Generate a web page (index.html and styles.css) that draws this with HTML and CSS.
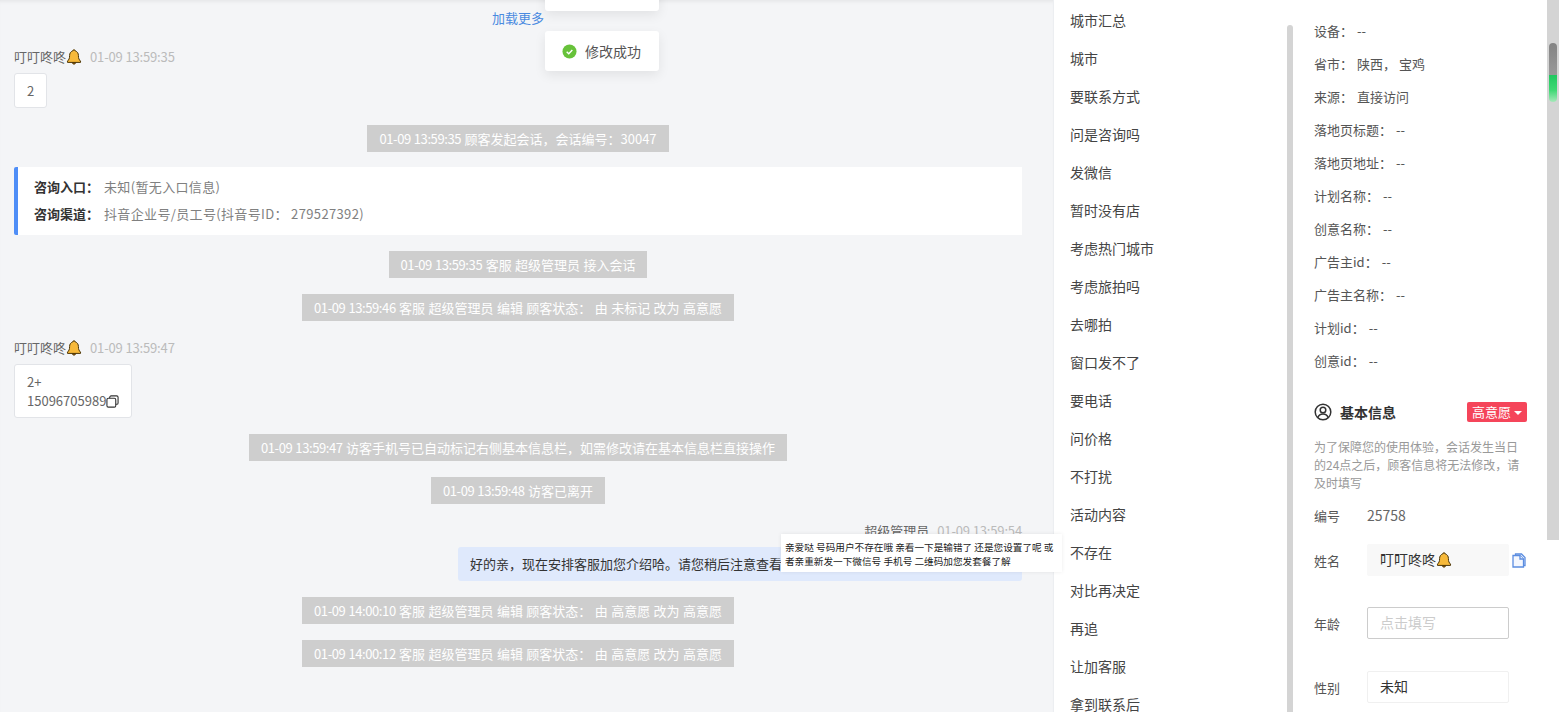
FILE: index.html
```html
<!DOCTYPE html>
<html lang="zh-CN">
<head>
    <meta charset="UTF-8">
    <title>会话详情</title>
    <link rel="stylesheet" href="styles.css">
</head>

<body>
    <svg class="defs">
        <symbol id="bell" viewBox="0 0 16 16">
            <path d="M8 .8c.8 0 1.300.5 1.300 1.200 2.200.6 3.100 2.400 3.100 4.600 0 2.900.7 4.200 2.100 5.500v1.300H1.500v-1.300c1.400-1.300 2.100-2.600 2.100-5.500 0-2.200.9-4 3.100-4.600C6.700 1.300 7.200.8 8 .8z" fill="#f7b93a" stroke="#4a3508" stroke-width="1"/>
            <path d="M6.200 13.500c.2 1 .9 1.700 1.800 1.700s1.600-.7 1.800-1.700z" fill="#8a5a10" stroke="#4a3508" stroke-width=".8"/>
        </symbol>
    </svg>

    <!-- Chat column -->
    <div class="chat">
        <div class="load-more">加载更多</div>

        <div class="name-row">叮叮咚咚<svg class="bell"><use href="#bell"/></svg><span class="time">01-09 13:59:35</span></div>
        <div class="bubble">2</div>

        <div class="sys sys-first"><span class="stamp">01-09 13:59:35</span> 顾客发起会话，会话编号：30047</div>

        <div class="entry-card">
            <div><b>咨询入口：</b>未知(暂无入口信息)</div>
            <div><b>咨询渠道：</b>抖音企业号/员工号(抖音号ID： 279527392)</div>
        </div>

        <div class="sys"><span class="stamp">01-09 13:59:35</span> 客服 超级管理员 接入会话</div>
        <div class="sys"><span class="stamp">01-09 13:59:46</span> 客服 超级管理员 编辑 顾客状态： 由 未标记 改为 高意愿</div>

        <div class="name-row name-gap">叮叮咚咚<svg class="bell"><use href="#bell"/></svg><span class="time">01-09 13:59:47</span></div>
        <div class="bubble">2+<br>15096705989<svg class="copy-small" viewBox="0 0 14 14"><rect x="1" y="3.500" width="9.500" height="9.500" rx="1.500"/><path d="M4 3.500V2.500A1.500 1.500 0 0 1 5.500 1H11.500A1.500 1.500 0 0 1 13 2.500V8.500A1.500 1.500 0 0 1 11.500 10H10.500"/></svg></div>

        <div class="sys"><span class="stamp">01-09 13:59:47</span> 访客手机号已自动标记右侧基本信息栏，如需修改请在基本信息栏直接操作</div>
        <div class="sys"><span class="stamp">01-09 13:59:48</span> 访客已离开</div>

        <div class="name-row name-gap name-right">超级管理员<span class="time">01-09 13:59:54</span></div>
        <div class="bubble-me">好的亲，现在安排客服加您介绍哈。请您稍后注意查看</div>

        <div class="sys"><span class="stamp">01-09 14:00:10</span> 客服 超级管理员 编辑 顾客状态： 由 高意愿 改为 高意愿</div>
        <div class="sys"><span class="stamp">01-09 14:00:12</span> 客服 超级管理员 编辑 顾客状态： 由 高意愿 改为 高意愿</div>
    </div>

    <!-- Quick reply list -->
    <div class="quick">
        <div class="quick-list">
            <div>城市汇总</div>
            <div>城市</div>
            <div>要联系方式</div>
            <div>问是咨询吗</div>
            <div>发微信</div>
            <div>暂时没有店</div>
            <div>考虑热门城市</div>
            <div>考虑旅拍吗</div>
            <div>去哪拍</div>
            <div>窗口发不了</div>
            <div>要电话</div>
            <div>问价格</div>
            <div>不打扰</div>
            <div>活动内容</div>
            <div>不存在</div>
            <div>对比再决定</div>
            <div>再追</div>
            <div>让加客服</div>
            <div>拿到联系后</div>
        </div>
        <div class="quick-bar"></div>
    </div>

    <!-- Customer panel -->
    <div class="panel">
        <div class="info-rows">
            <div>设备：<span class="val">--</span></div>
            <div>省市：<span class="val">陕西， 宝鸡</span></div>
            <div>来源：<span class="val">直接访问</span></div>
            <div>落地页标题：<span class="val">--</span></div>
            <div>落地页地址：<span class="val">--</span></div>
            <div>计划名称：<span class="val">--</span></div>
            <div>创意名称：<span class="val">--</span></div>
            <div>广告主id：<span class="val">--</span></div>
            <div>广告主名称：<span class="val">--</span></div>
            <div>计划id：<span class="val">--</span></div>
            <div>创意id：<span class="val">--</span></div>
        </div>

        <div class="base-head">
            <svg class="user-icon" viewBox="0 0 18 18"><circle cx="9" cy="9" r="7.800"/><circle cx="9" cy="7" r="2.800"/><path d="M3.800 14.600c1-2.500 3-3.500 5.200-3.500s4.200 1 5.200 3.500"/></svg>
            <span class="base-title">基本信息</span>
            <span class="level-tag">高意愿<i class="caret"></i></span>
        </div>
        <div class="note">为了保障您的使用体验，会话发生当日的24点之后，顾客信息将无法修改，请及时填写</div>

        <div class="field field-plain"><label>编号</label><span>25758</span></div>
        <div class="field field-name">
            <label>姓名</label>
            <div class="box box-filled">叮叮咚咚<svg class="bell"><use href="#bell"/></svg></div>
            <svg class="copy-doc" viewBox="0 0 14 15"><path d="M3.500 2.500V1H9.500L13 4.500V12.500H11.500"/><path d="M1 2.500H8L11.500 6V14H1z"/><path d="M8 2.500V6H11.500"/></svg>
        </div>
        <div class="field field-age">
            <label>年龄</label>
            <div class="box box-empty">点击填写</div>
        </div>
        <div class="field">
            <label>性别</label>
            <div class="box">未知</div>
        </div>
    </div>

    <div class="page-scroll">
        <div class="page-thumb"><div class="thumb-green"></div></div>
    </div>

    <!-- Toasts -->
    <div class="toasts">
        <div class="toast toast-old"></div>
        <div class="toast">
            <svg class="check" viewBox="0 0 16 16"><circle cx="8" cy="8" r="7.500"/><path d="M5 8.200l2.200 2.200L11 6.300"/></svg>
            修改成功
        </div>
    </div>

    <!-- Tooltip over the message -->
    <div class="tip">亲爱哒 号码用户不存在哦 亲看一下是输错了 还是您设置了呢 或者亲重新发一下微信号 手机号 二维码加您发套餐了解</div>
</body>
</html>
```

FILE: styles.css
```css
* {
    box-sizing: border-box;
}
body {
    display: flex;
    height: 100vh;
    margin: 0;
    overflow: hidden;
    font-family: "Noto Sans CJK SC", sans-serif;
    font-size: 13px;
    color: #333;
    background: #fff;
}
.defs {
    display: none;
}
.bell {
    width: 16px;
    height: 16px;
    vertical-align: -3px;
}

/* chat */
.chat {
    width: 1054px;
    flex-shrink: 0;
    padding: 8px 31px 0 14px;
    background: #f4f5f7;
    box-shadow: inset 0 4px 4px -3px rgba(0, 0, 0, 0.08);
    border-right: 1px solid #eceef1;
}
.load-more {
    height: 20px;
    line-height: 20px;
    text-align: center;
    color: #4a8ae0;
}
.name-row {
    height: 20px;
    line-height: 20px;
    margin-top: 19px;
    color: #666;
}
.name-gap {
    margin-top: 17px;
}
.name-right {
    text-align: right;
}
.time {
    margin-left: 8px;
    color: #bbb;
    letter-spacing: -0.15px;
}
.bubble {
    display: table;
    margin-top: 6px;
    padding: 7px 12px;
    line-height: 19px;
    border: 1px solid #e2e4e8;
    border-radius: 3px;
    background: #fff;
    color: #666;
}
.copy-small {
    width: 13px;
    height: 13px;
    vertical-align: -2px;
    fill: none;
    stroke: #333;
    stroke-width: 1.200;
}
.sys {
    display: table;
    margin: 16px auto 0;
    padding: 0 12px;
    height: 27px;
    line-height: 27px;
    word-spacing: 0.5px;
    background: #cecece;
    color: #fff;
}
.stamp {
    letter-spacing: -0.4px;
}
.sys-first {
    margin-top: 17px;
}
.entry-card {
    margin-top: 15px;
    height: 68px;
    padding: 6px 16px;
    line-height: 27px;
    letter-spacing: 0.35px;
    border-left: 4px solid #4f8ef7;
    border-radius: 2px 0 0 2px;
    background: #fff;
    color: #808080;
}
.entry-card b {
    margin-right: 5px;
    letter-spacing: 0;
    color: #333;
}
.bubble-me {
    width: 564px;
    height: 34px;
    margin: 6px 0 0 auto;
    padding: 0 12px;
    line-height: 34px;
    white-space: nowrap;
    border-radius: 3px;
    background: #dfe9fc;
}

/* quick replies */
.quick {
    display: flex;
    width: 239px;
    flex-shrink: 0;
    overflow: hidden;
}
.quick-list {
    flex-grow: 1;
    padding: 1px 0 0 16px;
    font-size: 14px;
    color: #444;
}
.quick-list div {
    height: 38px;
    line-height: 38px;
    white-space: nowrap;
}
.quick-bar {
    width: 6px;
    margin: 25px 0 0;
    background: #d4d4d4;
    border-radius: 3px 3px 0 0;
}

/* customer panel */
.panel {
    width: 254px;
    flex-shrink: 0;
    padding: 0 20px 0 21px;
    overflow: hidden;
}
.info-rows {
    padding-top: 14px;
}
.info-rows div {
    height: 33px;
    line-height: 33px;
    color: #555;
}
.val {
    margin-left: 4px;
}
.base-head {
    display: flex;
    align-items: center;
    margin-top: 25px;
    height: 20px;
}
.user-icon {
    width: 18px;
    height: 18px;
    fill: none;
    stroke: #333;
    stroke-width: 1.500;
}
.base-title {
    margin-left: 8px;
    font-size: 14px;
    font-weight: 700;
}
.level-tag {
    margin-left: auto;
    width: 60px;
    height: 20px;
    line-height: 20px;
    text-align: center;
    color: #fff;
    background: #f5455a;
    border-radius: 2px;
}
.caret {
    display: inline-block;
    margin-left: 3px;
    border: 4px solid transparent;
    border-top-color: #fff;
    border-bottom-width: 0;
    vertical-align: 2px;
}
.note {
    margin-top: 16px;
    font-size: 12px;
    line-height: 18px;
    color: #999;
}
.field {
    display: flex;
    align-items: center;
    height: 32px;
    margin-top: 32px;
}
.field-plain {
    height: 20px;
    margin-top: 13px;
    color: #666;
    font-size: 14px;
}
.field-plain label {
    font-size: 13px;
}
.field-name {
    margin-top: 19px;
}
.field-age {
    margin-top: 31px;
}
.field label {
    width: 53px;
    flex-shrink: 0;
    color: #555;
}
.box {
    width: 142px;
    height: 32px;
    padding: 0 12px;
    font-size: 14px;
    line-height: 29px;
    border: 1px solid #f0f0f0;
    border-radius: 2px;
}
.box-filled {
    background: #f8f8f8;
    border-color: #f8f8f8;
}
.box-empty {
    border-color: #ccc;
    color: #ccc;
}
.copy-doc {
    width: 14px;
    height: 15px;
    margin-left: 3px;
    fill: #f4f7fe;
    stroke: #5b8de0;
    stroke-width: 1.300;
}

/* page scrollbar */
.page-scroll {
    width: 12px;
    flex-shrink: 0;
}
.page-thumb {
    height: 540px;
    padding: 43px 2px 0;
    background: #d4d4d4;
}
.thumb-green {
    height: 59px;
    border-radius: 4px;
    background: linear-gradient(#848484 0, #999 54%, #1fc85f 54%, #3fd874 80%, #a6e8ba 100%);
}

/* overlays */
.toasts {
    position: absolute;
    top: -29px;
    left: 545px;
    width: 114px;
}
.toast {
    display: flex;
    align-items: center;
    height: 40px;
    margin-bottom: 20px;
    padding-left: 17px;
    font-size: 14px;
    color: #555;
    background: #fff;
    border-radius: 3px;
    box-shadow: 0 4px 12px rgba(0, 0, 0, 0.08);
}
.check {
    width: 15px;
    height: 15px;
    margin-right: 8px;
}
.check circle {
    fill: #67c23a;
}
.check path {
    fill: none;
    stroke: #fff;
    stroke-width: 1.500;
}
.tip {
    position: absolute;
    top: 534px;
    left: 781px;
    width: 281px;
    height: 38px;
    padding: 6px 4px;
    font-size: 9.650px;
    line-height: 14px;
    color: #222;
    background: #fff;
    box-shadow: 0 0 4px rgba(0, 0, 0, 0.08);
}
```
